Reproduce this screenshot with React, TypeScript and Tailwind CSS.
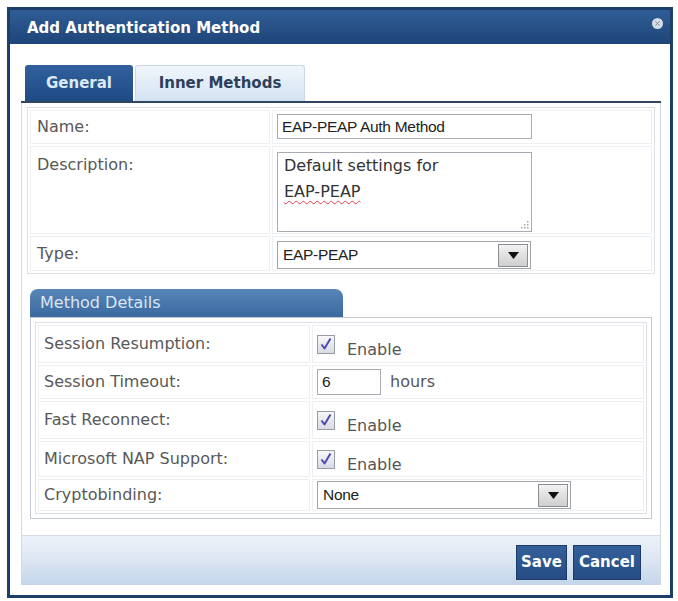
import type { ReactNode } from "react"

function CheckBox() {
  return (
    <span className="w-[18px] h-[19px] border border-[#979ba3] bg-linear-to-b from-[#f8f8fb] to-[#d8dae3] flex items-center justify-center shrink-0">
      <svg width="14" height="14" viewBox="0 0 14 14">
        <path d="M2.5 7.5 L5.5 11.5 L11.5 1.5" fill="none" stroke="#4a4cb2" strokeWidth="2" strokeLinejoin="round" />
      </svg>
    </span>
  )
}

function DropButton() {
  return (
    <span className="w-[30px] h-[23px] border border-[#8a8d92] bg-linear-to-b from-[#f2f2f2] to-[#cfcfcf] flex items-center justify-center">
      <svg width="11" height="7" viewBox="0 0 11 7">
        <path d="M0 0 H11 L5.5 7 Z" fill="#111" />
      </svg>
    </span>
  )
}

function Select({ value, className }: { value: string; className: string }) {
  return (
    <div className={`${className} h-[28px] border border-[#a0a4aa] bg-white flex items-center justify-between pl-[5px] pr-[2px] font-['Liberation_Sans',sans-serif] text-[15.5px] text-[#222] tracking-[-0.3px]`}>
      <span>{value}</span>
      <DropButton />
    </div>
  )
}

function FormRow({ label, h, children, labelCls = "items-start pt-[6px]" }: { label: string; h: string; children: ReactNode; labelCls?: string }) {
  return (
    <div className={`flex gap-[2px] ${h}`}>
      <div className={`w-[240px] border border-[#edf0f3] flex ${labelCls} pl-[6px] text-[16px] text-[#585858]`}>{label}</div>
      <div className="flex-1 border border-[#edf0f3] flex items-start pl-[4px] pt-[2px]">{children}</div>
    </div>
  )
}

function DetailRow({ label, h, children }: { label: string; h: string; children: ReactNode }) {
  return (
    <div className={`flex gap-[2px] ${h}`}>
      <div className="w-[272px] border border-[#edf0f3] flex items-center pl-[5px] text-[16px] text-[#585858]">{label}</div>
      <div className="flex-1 border border-[#edf0f3] flex items-center pl-[4px]">{children}</div>
    </div>
  )
}

function Enable() {
  return (
    <div className="flex items-center gap-[12px]">
      <CheckBox />
      <span className="mt-[11px] text-[16px] text-[#555]">Enable</span>
    </div>
  )
}

export default function App() {
  return (
    <div className="w-[678px] h-[601px] bg-white pt-[7px] pl-[7px] font-['DejaVu_Sans',sans-serif]">
      <div className="w-[666px] h-[591px] border-[3px] border-[#1d3d6b] flex flex-col">
        {/* title bar */}
        <div className="h-[34px] shrink-0 bg-linear-to-b from-[#305d96] to-[#1e4579] flex items-center justify-between pl-[17px] pr-[7px]">
          <span className="text-white font-bold text-[15px] mt-[2px]">Add Authentication Method</span>
          <span className="self-start mt-[8px] w-[11px] h-[11px] rounded-full bg-[#d7dde6] flex items-center justify-center">
            <svg width="5" height="5" viewBox="0 0 5 5">
              <path d="M0.5 0.5 L4.5 4.5 M4.5 0.5 L0.5 4.5" stroke="#7d8795" strokeWidth="1" />
            </svg>
          </span>
        </div>

        <div className="flex-1 bg-white flex flex-col pt-[21px] pl-[11px] pr-[9px] pb-[10px]">
          {/* tabs */}
          <div className="flex h-[36px] ml-[4px] gap-[2px] shrink-0">
            <div className="w-[108px] rounded-t-[3px] bg-linear-to-b from-[#30609c] to-[#1f4b85] flex items-center justify-center text-[15px] font-bold text-[#dce8f6]">
              General
            </div>
            <div className="w-[170px] rounded-t-[3px] border border-b-0 border-[#c9d7e8] bg-linear-to-b from-[#f1f6fc] to-[#d3e2f2] flex items-center justify-center text-[15px] font-bold text-[#2e3f5a]">
              Inner Methods
            </div>
          </div>
          <div className="h-[2px] bg-[#33465f] shrink-0" />

          <div className="flex-1 flex flex-col border-x border-[#d3d9e1]">
            <div className="px-[5px] pt-[4px]">
              {/* general form */}
              <div className="border border-[#dde1e7] p-[2px] flex flex-col gap-[2px]">
                <FormRow label="Name:" h="h-[34px]" labelCls="items-center">
                  <div className="w-[255px] h-[25px] mt-[1px] border border-[#a8acb2] flex items-center pl-[4px] font-['Liberation_Sans',sans-serif] text-[15.5px] text-[#222] tracking-[-0.3px]">
                    EAP-PEAP Auth Method
                  </div>
                </FormRow>
                <FormRow label="Description:" h="h-[88px]">
                  <div className="relative w-[255px] h-[80px] mt-[3px] border border-[#a8acb2] pl-[6px] text-[16px] leading-[26px] text-[#333]">
                    <div>Default settings for</div>
                    <div className="underline decoration-wavy decoration-[#e0424a] decoration-1 underline-offset-[3px]">EAP-PEAP</div>
                    <svg className="absolute right-[2px] bottom-[2px]" width="9" height="9" viewBox="0 0 9 9">
                      <g fill="#a3a3a3">
                        <rect x="7" y="1" width="1.5" height="1.5" />
                        <rect x="4" y="4" width="1.5" height="1.5" />
                        <rect x="7" y="4" width="1.5" height="1.5" />
                        <rect x="1" y="7" width="1.5" height="1.5" />
                        <rect x="4" y="7" width="1.5" height="1.5" />
                        <rect x="7" y="7" width="1.5" height="1.5" />
                      </g>
                    </svg>
                  </div>
                </FormRow>
                <FormRow label="Type:" h="h-[35px]" labelCls="items-center">
                  <Select value="EAP-PEAP" className="w-[254px] mt-[2px]" />
                </FormRow>
              </div>

              {/* method details */}
              <div className="mx-[3px] mt-[15px]">
                <div className="w-[313px] h-[28px] rounded-t-[8px] bg-linear-to-b from-[#5886b8] to-[#3a69a0] flex items-center pl-[10px] text-[16px] text-[#d9e6f4]">
                  Method Details
                </div>
                <div className="border border-[#c2c9d2] p-[4px]">
                  <div className="border border-[#dde1e7] p-[2px] flex flex-col gap-[2px]">
                    <DetailRow label="Session Resumption:" h="h-[38px]">
                      <Enable />
                    </DetailRow>
                    <DetailRow label="Session Timeout:" h="h-[34px]">
                      <div className="flex items-center gap-[9px]">
                        <div className="w-[64px] h-[26px] border border-[#a8acb2] flex items-center pl-[4px] font-['Liberation_Sans',sans-serif] text-[15.5px] text-[#222]">
                          6
                        </div>
                        <span className="text-[16px] text-[#555]">hours</span>
                      </div>
                    </DetailRow>
                    <DetailRow label="Fast Reconnect:" h="h-[38px]">
                      <Enable />
                    </DetailRow>
                    <DetailRow label="Microsoft NAP Support:" h="h-[36px]">
                      <Enable />
                    </DetailRow>
                    <DetailRow label="Cryptobinding:" h="h-[32px]">
                      <Select value="None" className="w-[254px]" />
                    </DetailRow>
                  </div>
                </div>
              </div>
            </div>

            {/* footer */}
            <div className="mt-auto h-[50px] border-t border-[#d3dae3] bg-linear-to-b from-[#edf2f9] via-[#dce6f2] to-[#c3d5ea] flex items-center justify-end gap-[6px] pr-[19px] pt-[4px]">
              <button className="w-[51px] h-[35px] border border-[#1d3b66] bg-linear-to-b from-[#34609a] to-[#264c84] text-white font-bold text-[15px]">
                Save
              </button>
              <button className="w-[68px] h-[35px] border border-[#1d3b66] bg-linear-to-b from-[#34609a] to-[#264c84] text-white font-bold text-[15px]">
                Cancel
              </button>
            </div>
          </div>
        </div>
      </div>
    </div>
  )
}
